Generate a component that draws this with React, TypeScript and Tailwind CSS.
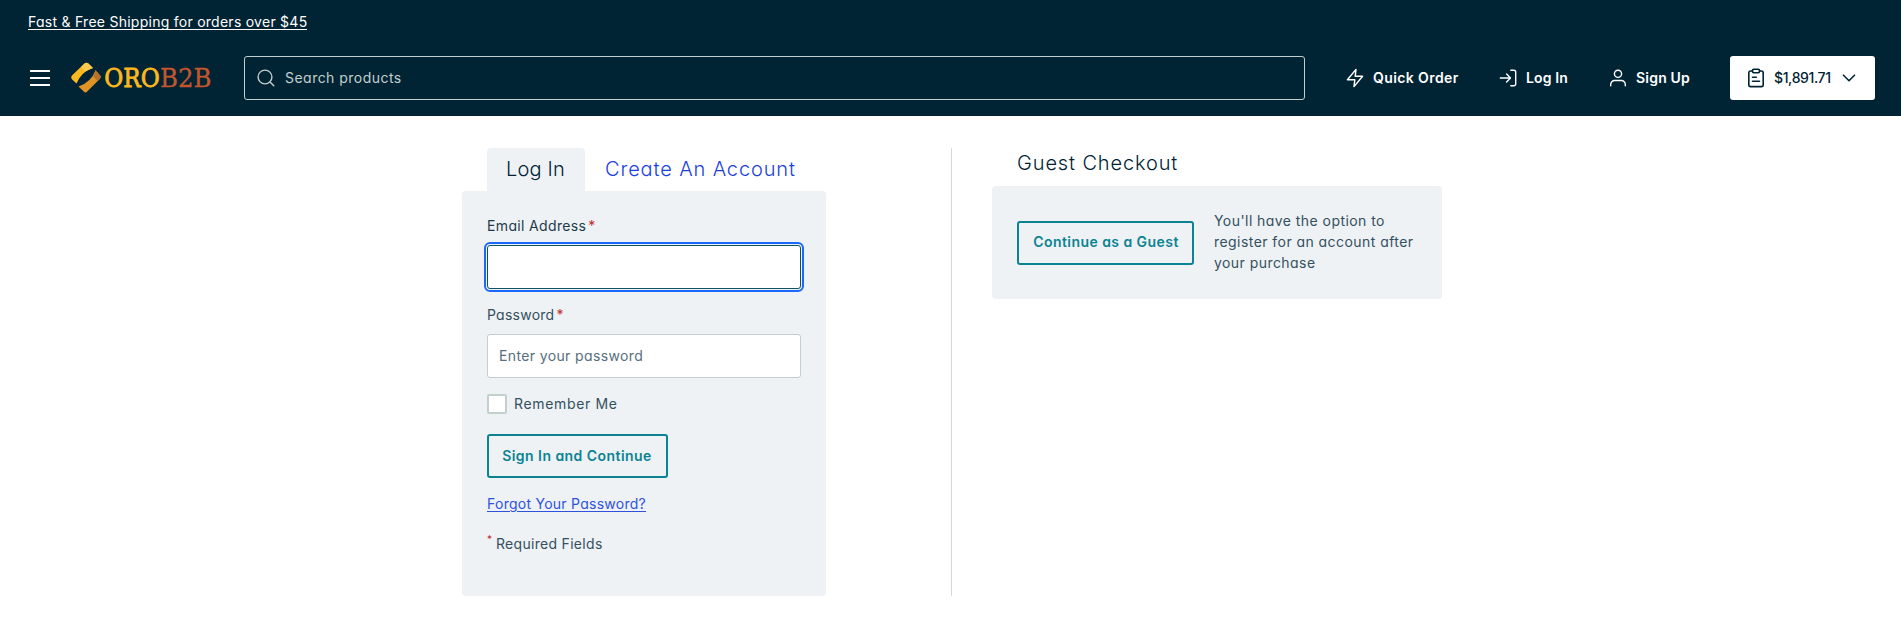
import React from "react";

type IconProps = { className?: string };

function SearchIcon({ className }: IconProps) {
  return (
    <svg className={className} width="18" height="18" viewBox="0 0 18 18" fill="none" stroke="currentColor" strokeWidth="1.4" strokeLinecap="round">
      <circle cx="8" cy="8" r="6.9" />
      <path d="M13 13l3.8 3.7" />
    </svg>
  );
}

function BoltIcon() {
  return (
    <svg width="18" height="20" viewBox="0 0 18 20" fill="none" stroke="currentColor" strokeWidth="1.4" strokeLinejoin="round">
      <path d="M10 1.4L1.4 11.8h7.4L8 18.6l8.6-10.4H9.2z" />
    </svg>
  );
}

function LogInIcon() {
  return (
    <svg width="18" height="18" viewBox="0 0 18 18" fill="none" stroke="currentColor" strokeWidth="1.4" strokeLinecap="round" strokeLinejoin="round">
      <path d="M11.8 1.2h3.1a1.8 1.8 0 0 1 1.8 1.8v12a1.8 1.8 0 0 1-1.8 1.8h-3.1" />
      <path d="M1.3 9h10M7.6 5.1L11.5 9l-3.9 3.9" />
    </svg>
  );
}

function UserIcon() {
  return (
    <svg width="18" height="18" viewBox="0 0 18 18" fill="none" stroke="currentColor" strokeWidth="1.4" strokeLinecap="round" strokeLinejoin="round">
      <circle cx="9" cy="4.8" r="3.6" />
      <path d="M1.7 16.8v-1.4a3.9 3.9 0 0 1 3.9-3.9h6.8a3.9 3.9 0 0 1 3.9 3.9v1.4" />
    </svg>
  );
}

function ClipboardIcon() {
  return (
    <svg width="18" height="20" viewBox="0 0 18 20" fill="none" stroke="currentColor" strokeWidth="1.6" strokeLinecap="round" strokeLinejoin="round">
      <path d="M5.5 3H3.7a1.9 1.9 0 0 0-1.9 1.9v11.8a1.9 1.9 0 0 0 1.9 1.9h10.6a1.9 1.9 0 0 0 1.9-1.9V4.9A1.9 1.9 0 0 0 14.3 3h-1.8" />
      <rect x="5.5" y="1.3" width="7" height="3.5" rx="1.2" />
      <path d="M5.5 9.2h3.8M5.5 13.2h7" />
    </svg>
  );
}

function ChevronIcon() {
  return (
    <svg width="14" height="8" viewBox="0 0 14 8" fill="none" stroke="currentColor" strokeWidth="1.6" strokeLinecap="round" strokeLinejoin="round">
      <path d="M1.5 1.2L7 6.7l5.5-5.5" />
    </svg>
  );
}

function Logo() {
  return (
    <svg width="150" height="32" viewBox="0 0 150 32" className="ml-5 shrink-0">
      <path d="M14.5 1.5Q16.5 0 18.4 1.5L23 5.9Q11 10 6.5 21.4L1.9 17.2Q.3 15.5 1.9 13.6z" fill="#fcb81f" />
      <path d="M14.5 1.5Q16.5 0 18.4 1.5L23 5.9Q18.5 7.3 15.5 9.5L11 5z" fill="#fdcb52" />
      <path d="M25.5 8.3l4.5 4.9Q31.6 15 30 16.8L17.2 29.6Q15.5 31.3 13.8 29.6L8.5 24.5Q21 20.5 25.5 8.3z" fill="#e09426" />
      <path d="M25.5 8.3l4.5 4.9Q31.6 15 30 16.8l-2.2 2.2-4.6-4.6Q24.6 11.5 25.500 8.300z" fill="#b5702b" />
      <text x="34.200" y="25.200" textLength="55.500" lengthAdjust="spacingAndGlyphs" fontFamily="DejaVu Serif, serif" fontSize="25.500" fill="#fcb81f" stroke="#fcb81f" strokeWidth="0.800">ORO</text>
      <text x="90" y="25.200" textLength="51.500" lengthAdjust="spacingAndGlyphs" fontFamily="DejaVu Serif, serif" fontSize="25.500" fill="#c5562c" stroke="#c5562c" strokeWidth="0.300">B2B</text>
    </svg>
  );
}

function Label({ children, className }: { children: string; className: string }) {
  return (
    <label className="flex h-[21px] gap-[2px] leading-[21px]">
      <span className={className}>{children}</span>
      <span className="text-[#c2292e]">*</span>
    </label>
  );
}

function Header() {
  return (
    <header className="h-[116px] bg-[#002434] text-white">
      <div className="flex h-11 items-center pl-7">
        <a className="border-b border-white leading-[14px] tracking-[0.26px]">Fast &amp; Free Shipping for orders over $45</a>
      </div>
      <div className="flex h-[68px] items-center pr-[26px] pl-[30px]">
        <button className="flex w-5 shrink-0 flex-col gap-[5px]" aria-label="Menu">
          <span className="h-[2px] bg-white" />
          <span className="h-[2px] bg-white" />
          <span className="h-[2px] bg-white" />
        </button>
        <Logo />
        <div className="ml-6 flex h-11 w-[1061px] shrink-0 items-center rounded-[3px] border border-[#c2cfcf] pl-3 text-[#c2cfcf]">
          <SearchIcon />
          <span className="ml-[10px] pb-[2px] tracking-[0.47px]">Search products</span>
        </div>
        <nav className="ml-[41px] flex grow items-center font-semibold whitespace-nowrap">
          <a className="flex w-[153px] items-center gap-[9px] tracking-[0.4px]"><BoltIcon /><span className="pb-[2px]">Quick Order</span></a>
          <a className="flex w-[110px] items-center gap-[9px] tracking-[0.15px]"><LogInIcon /><span className="pb-[2px]">Log In</span></a>
          <a className="flex items-center gap-[9px] tracking-[0.2px]"><UserIcon /><span className="pb-[2px]">Sign Up</span></a>
        </nav>
        <button className="flex h-11 w-[145px] shrink-0 items-center rounded-[3px] bg-white pl-[17px] font-medium text-[#002434]">
          <ClipboardIcon />
          <span className="ml-[9px] w-[68px] pb-px text-left tracking-[-0.37px]">$1,891.71</span>
          <ChevronIcon />
        </button>
      </div>
    </header>
  );
}

function LoginPanel() {
  return (
    <section className="w-[364px]">
      <div className="flex h-[43px] pl-[25px] text-[20px] font-light">
        <div className="w-[98px] rounded-t-[4px] bg-[#eef2f5] pl-[19px] leading-[42px] tracking-[0.2px] text-[#002434]">Log In</div>
        <a className="ml-5 leading-[42px] tracking-[0.87px] whitespace-nowrap text-[#1c3fdd]">Create An Account</a>
      </div>
      <form className="flex h-[405px] flex-col items-start rounded-[4px] bg-[#eef2f5] px-[25px] pt-6 text-[#34505e]">
        <Label className="tracking-[0.35px] text-[#1d3b4a]">Email Address</Label>
        <div className="mt-[9px] h-11 w-full rounded-[3px] border border-[#0c5560] bg-white outline-2 outline-offset-1 outline-[#1b68ff]" />
        <div className="h-[15px]" />
        <Label className="tracking-[0.25px]">Password</Label>
        <div className="mt-[9px] h-11 w-full rounded-[3px] border border-[#c2cfcf] bg-white pl-[11px] leading-[42px] tracking-[0.37px] text-[#566f7c]">Enter your password</div>
        <div className="mt-4 flex h-5 items-center gap-[7px]">
          <span className="size-5 rounded-[2px] border-2 border-[#c2cfcf] bg-white" />
          <span className="pb-px tracking-[0.65px]">Remember Me</span>
        </div>
        <button type="button" className="mt-5 h-11 w-[181px] rounded-[3px] border-2 border-[#0b8393] pr-px pb-[2px] font-semibold tracking-[0.45px] whitespace-nowrap text-[#0b8393]">Sign In and Continue</button>
        <a className="mt-[15px] leading-[21px] tracking-[0.26px] text-[#2f51e0] underline underline-offset-2">Forgot Your Password?</a>
        <p className="mt-[19px] flex gap-1 leading-[21px]">
          <span className="-mt-[4px] w-[5px] text-[10px] text-[#c2292e]">*</span>
          <span className="tracking-[0.3px]">Required Fields</span>
        </p>
      </form>
    </section>
  );
}

function GuestPanel() {
  return (
    <section className="ml-10 w-[450px]">
      <h2 className="h-[38px] pl-[25px] text-[20px] leading-[30px] font-light tracking-[0.87px] text-[#002434]">Guest Checkout</h2>
      <div className="flex h-[113px] items-center rounded-[4px] bg-[#eef2f5] px-[25px]">
        <button className="h-11 w-[177px] shrink-0 rounded-[3px] border-2 border-[#0b8393] pb-[2px] pl-px font-semibold tracking-[0.45px] whitespace-nowrap text-[#0b8393]">Continue as a Guest</button>
        <p className="ml-5 pb-[2px] leading-[21px] tracking-[0.44px] whitespace-nowrap text-[#34505e]">
          You'll have the option to<br />register for an account after<br />your purchase
        </p>
      </div>
    </section>
  );
}

export default function App() {
  return (
    <div className="min-h-[631px] bg-white font-['Inter',sans-serif] text-[14px] [font-feature-settings:'cv11']">
      <Header />
      <main className="flex pt-8 pl-[462px]">
        <LoginPanel />
        <div className="ml-[125px] h-[448px] w-px bg-[#d3d9dc]" />
        <GuestPanel />
      </main>
    </div>
  );
}
